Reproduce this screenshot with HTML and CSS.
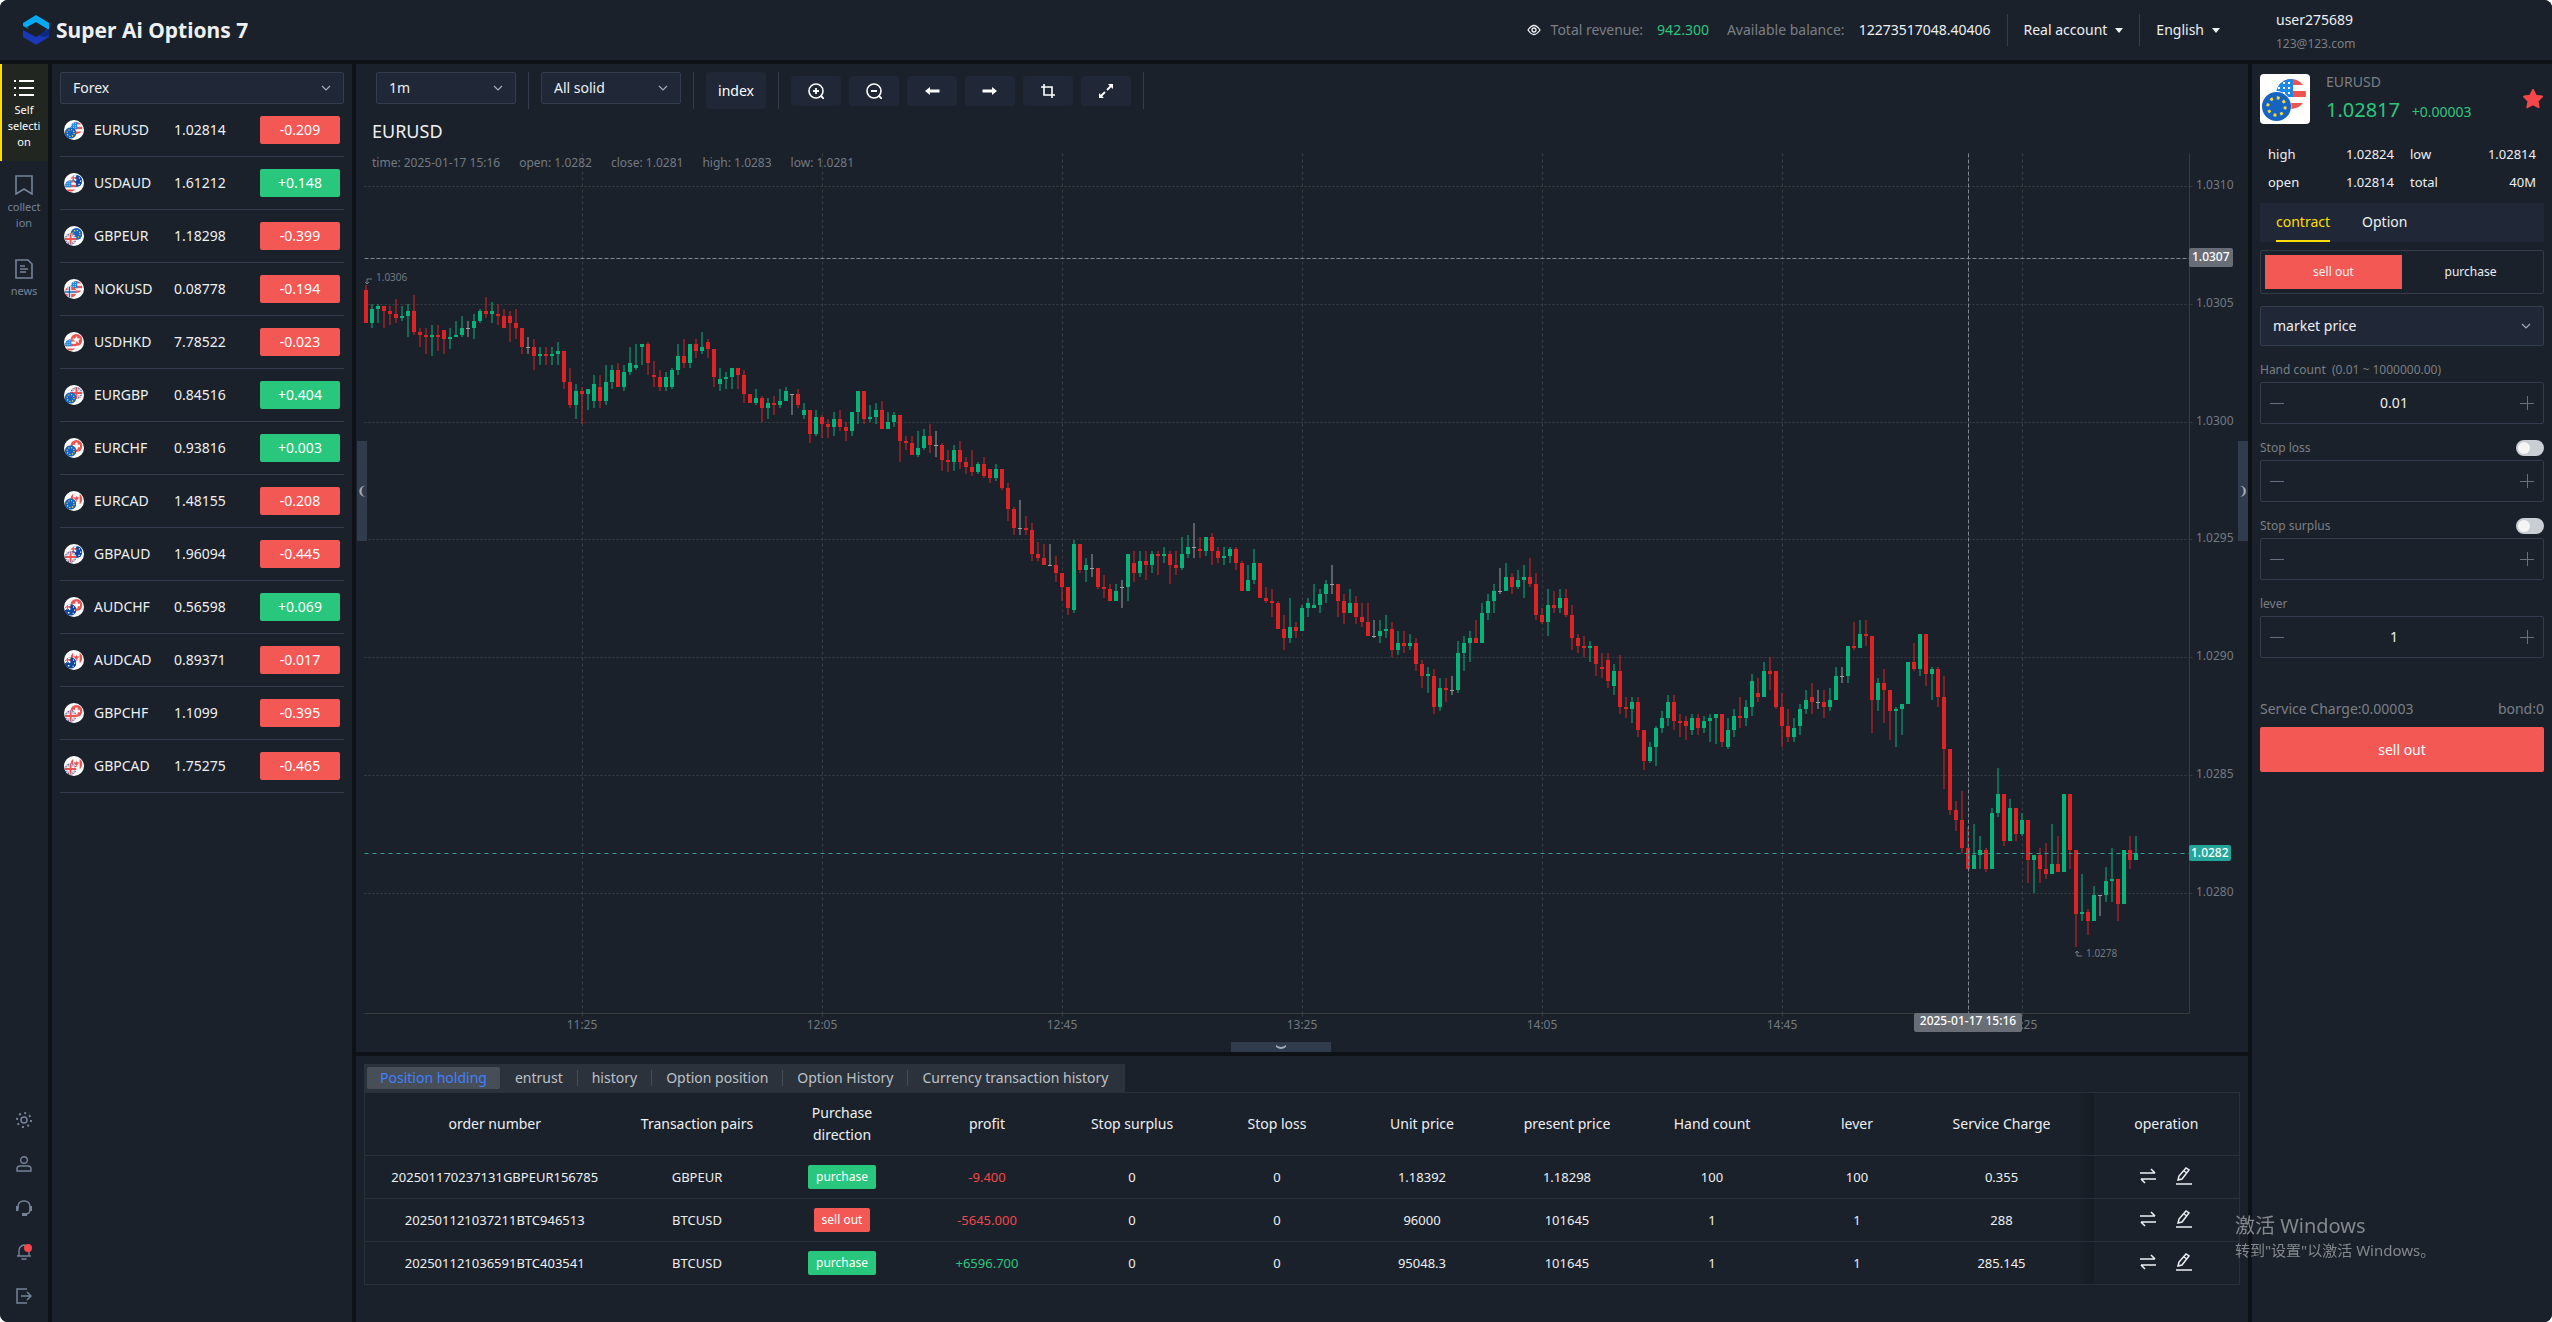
FILE: index.html
```html
<!DOCTYPE html>
<html lang="en">
<head>
<meta charset="utf-8">
<meta name="viewport" content="width=device-width, initial-scale=1">
<title>Super Ai Options 7</title>
<link rel="stylesheet" href="styles.css">
</head>
<body>
<svg class="defs" aria-hidden="true">
  <clipPath id="disc"><circle cx="15" cy="15" r="15"/></clipPath>
  <symbol id="usd" viewBox="0 0 30 30"><g clip-path="url(#disc)"><path fill="#fff" d="M0 0h30v30H0z"/><path fill="#ef5350" d="M0 0h30v6H0zM0 12h30v6H0zM0 24h30v6H0z"/><path fill="#1e88e5" d="M0 0h17v18H0z"/><path stroke="#fff" stroke-width="2" stroke-dasharray="2 3" d="M2 4h15M2 9h15M2 14h15"/></g></symbol>
  <symbol id="eur" viewBox="0 0 30 30"><circle cx="15" cy="15" r="15" fill="#1565c0"/><circle cx="15" cy="15" r="9" fill="none" stroke="#fdd835" stroke-width="3" stroke-dasharray="3 4.07"/></symbol>
  <symbol id="gbp" viewBox="0 0 30 30"><g clip-path="url(#disc)"><path fill="#3f5fb0" d="M0 0h30v30H0z"/><path stroke="#fff" stroke-width="5" d="M0 0l30 30M30 0L0 30"/><path stroke="#ef5350" stroke-width="2" d="M0 0l30 30M30 0L0 30"/><path stroke="#fff" stroke-width="9" d="M15 0v30M0 15h30"/><path stroke="#ef5350" stroke-width="5" d="M15 0v30M0 15h30"/></g></symbol>
  <symbol id="aud" viewBox="0 0 30 30"><g clip-path="url(#disc)"><path fill="#0d47a1" d="M0 0h30v30H0z"/><path stroke="#fff" stroke-width="5" d="M0 0l14 14M14 0L0 14"/><path stroke="#ef5350" stroke-width="3" d="M7 0v15M0 7h15"/><path fill="#fff" d="M21 6h3v3h-3zM24 14h3v3h-3zM20 22h3v3h-3zM8 20h4v4H8z"/></g></symbol>
  <symbol id="nok" viewBox="0 0 30 30"><g clip-path="url(#disc)"><path fill="#ef5350" d="M0 0h30v30H0z"/><path stroke="#fff" stroke-width="9" d="M12 0v30M0 15h30"/><path stroke="#1565c0" stroke-width="4" d="M12 0v30M0 15h30"/></g></symbol>
  <symbol id="hkd" viewBox="0 0 30 30"><circle cx="15" cy="15" r="15" fill="#ef5350"/><path fill="#fff" d="M15 5l3 6 7 0-5 5 2 7-7-4-7 4 2-7-5-5 7 0z"/></symbol>
  <symbol id="chf" viewBox="0 0 30 30"><circle cx="15" cy="15" r="15" fill="#ef5350"/><path fill="#fff" d="M12 6h6v6h6v6h-6v6h-6v-6H6v-6h6z"/></symbol>
  <symbol id="cad" viewBox="0 0 30 30"><g clip-path="url(#disc)"><path fill="#fff" d="M0 0h30v30H0z"/><path fill="#ef5350" d="M0 0h7v30H0zM23 0h7v30h-7zM15 7l2 4 4-1-1 5-4 3v4h-2v-4l-4-3-1-5 4 1z"/></g></symbol>
  <symbol id="chevron" viewBox="0 0 12 12"><path d="M2 4l4 4 4-4" fill="none" stroke="currentColor" stroke-width="1.2"/></symbol>
  <symbol id="swap" viewBox="0 0 16 16"><path d="M0 5h15M11 1l4 4M16 11H1M5 15l-4-4" fill="none" stroke="currentColor" stroke-width="1.6"/></symbol>
  <symbol id="edit" viewBox="0 0 16 18"><path d="M0 17h16M2 13l1-4 7-8 3 2-7 9zM8 4l3 2" fill="none" stroke="currentColor" stroke-width="1.5"/></symbol>
</svg>

<div class="app">
  <header class="topbar">
    <svg class="logo" viewBox="0 0 26 30"><path fill="#03a9f4" d="M0 8L13 0l13 8v7l-13-8-9 5 2 2-6-3z"/><path fill="#1a37b8" d="M0 15l13 7 9-5v-2l4-1v8l-13 8-13-8z"/><path fill="#0b2a80" d="M20 17l6-3v7l-6 1-4-2z"/></svg>
    <h1 class="brand">Super Ai Options 7</h1>
    <dl class="totals">
      <svg class="eye" viewBox="0 0 14 14"><path d="M1 7q6-9 12 0q-6 9-12 0z" fill="none" stroke="currentColor" stroke-width="1.3"/><circle cx="7" cy="7" r="2" fill="none" stroke="currentColor" stroke-width="1.3"/></svg>
      <dt>Total revenue:</dt><dd class="up">942.300</dd>
      <dt>Available balance:</dt><dd>12273517048.40406</dd>
    </dl>
    <button class="menu" type="button">Real account <span class="caret"></span></button>
    <button class="menu" type="button">English <span class="caret"></span></button>
    <div class="user"><span>user275689</span><small>123@123.com</small></div>
  </header>

  <div class="body">
    <nav class="rail">
      <a class="rail-item active" href="#self"><svg viewBox="0 0 20 20"><path d="M5 3h15M5 10h15M5 17h15M0 3h2M0 10h2M0 17h2" stroke="currentColor" stroke-width="2"/></svg><span>Self<br>selecti<br>on</span></a>
      <a class="rail-item" href="#collection"><svg viewBox="0 0 20 20"><path d="M2 1h16v18l-8-5-8 5z" fill="none" stroke="currentColor" stroke-width="1.6"/></svg><span>collect<br>ion</span></a>
      <a class="rail-item" href="#news"><svg viewBox="0 0 20 20"><path d="M2 1h12l4 4v14H2zM6 7h5M6 10h8M6 13h6" fill="none" stroke="currentColor" stroke-width="1.6"/></svg><span>news</span></a>
      <div class="rail-tools">
        <button type="button" aria-label="Theme"><svg viewBox="0 0 16 16"><circle cx="8" cy="8" r="3" fill="none" stroke="currentColor" stroke-width="1.5"/><circle cx="8" cy="8" r="7" fill="none" stroke="currentColor" stroke-width="2" stroke-dasharray="2 3.5"/></svg></button>
        <button type="button" aria-label="Profile"><svg viewBox="0 0 16 16"><circle cx="8" cy="4" r="3.3" fill="none" stroke="currentColor" stroke-width="1.4"/><path d="M1 15v-2q0-3 3-3h8q3 0 3 3v2z" fill="none" stroke="currentColor" stroke-width="1.4"/></svg></button>
        <button type="button" aria-label="Support"><svg viewBox="0 0 16 16"><path d="M2 9V7q0-6 6-6t6 6v3q0 4-5 4" fill="none" stroke="currentColor" stroke-width="1.4"/><path d="M0 6h2.500v5H0zM13.500 6H16v5h-2.500zM6 13h5v3H6z" fill="currentColor"/></svg></button>
        <button class="dot" type="button" aria-label="Notifications"><svg viewBox="0 0 16 16"><path d="M1 12h14M3 12V7q0-5 5-6q5 1 5 6v5M5.500 15h5" fill="none" stroke="currentColor" stroke-width="1.4"/></svg></button>
        <button type="button" aria-label="Log out"><svg viewBox="0 0 16 16"><path d="M11 1H1v14h10M5 8h10M11 4l4 4-4 4" fill="none" stroke="currentColor" stroke-width="1.5"/></svg></button>
      </div>
    </nav>

    <aside class="watch">
      <label class="select"><select aria-label="Market"><option>Forex</option></select><svg><use href="#chevron"/></svg></label>
      <ul class="pairs">
        <li><svg class="duo" viewBox="0 0 50 50"><circle cx="25" cy="25" r="25"/><use href="#usd" x="16" y="5" width="30" height="30"/><use href="#eur" x="2" y="18" width="29" height="29"/></svg><span>EURUSD</span><span>1.02814</span><b class="tag down">-0.209</b></li>
        <li><svg class="duo" viewBox="0 0 50 50"><circle cx="25" cy="25" r="25"/><use href="#aud" x="16" y="5" width="30" height="30"/><use href="#usd" x="2" y="18" width="29" height="29"/></svg><span>USDAUD</span><span>1.61212</span><b class="tag rise">+0.148</b></li>
        <li><svg class="duo" viewBox="0 0 50 50"><circle cx="25" cy="25" r="25"/><use href="#eur" x="16" y="5" width="30" height="30"/><use href="#gbp" x="2" y="18" width="29" height="29"/></svg><span>GBPEUR</span><span>1.18298</span><b class="tag down">-0.399</b></li>
        <li><svg class="duo" viewBox="0 0 50 50"><circle cx="25" cy="25" r="25"/><use href="#usd" x="16" y="5" width="30" height="30"/><use href="#nok" x="2" y="18" width="29" height="29"/></svg><span>NOKUSD</span><span>0.08778</span><b class="tag down">-0.194</b></li>
        <li><svg class="duo" viewBox="0 0 50 50"><circle cx="25" cy="25" r="25"/><use href="#hkd" x="16" y="5" width="30" height="30"/><use href="#usd" x="2" y="18" width="29" height="29"/></svg><span>USDHKD</span><span>7.78522</span><b class="tag down">-0.023</b></li>
        <li><svg class="duo" viewBox="0 0 50 50"><circle cx="25" cy="25" r="25"/><use href="#gbp" x="16" y="5" width="30" height="30"/><use href="#eur" x="2" y="18" width="29" height="29"/></svg><span>EURGBP</span><span>0.84516</span><b class="tag rise">+0.404</b></li>
        <li><svg class="duo" viewBox="0 0 50 50"><circle cx="25" cy="25" r="25"/><use href="#chf" x="16" y="5" width="30" height="30"/><use href="#eur" x="2" y="18" width="29" height="29"/></svg><span>EURCHF</span><span>0.93816</span><b class="tag rise">+0.003</b></li>
        <li><svg class="duo" viewBox="0 0 50 50"><circle cx="25" cy="25" r="25"/><use href="#cad" x="16" y="5" width="30" height="30"/><use href="#eur" x="2" y="18" width="29" height="29"/></svg><span>EURCAD</span><span>1.48155</span><b class="tag down">-0.208</b></li>
        <li><svg class="duo" viewBox="0 0 50 50"><circle cx="25" cy="25" r="25"/><use href="#aud" x="16" y="5" width="30" height="30"/><use href="#gbp" x="2" y="18" width="29" height="29"/></svg><span>GBPAUD</span><span>1.96094</span><b class="tag down">-0.445</b></li>
        <li><svg class="duo" viewBox="0 0 50 50"><circle cx="25" cy="25" r="25"/><use href="#chf" x="16" y="5" width="30" height="30"/><use href="#aud" x="2" y="18" width="29" height="29"/></svg><span>AUDCHF</span><span>0.56598</span><b class="tag rise">+0.069</b></li>
        <li><svg class="duo" viewBox="0 0 50 50"><circle cx="25" cy="25" r="25"/><use href="#cad" x="16" y="5" width="30" height="30"/><use href="#aud" x="2" y="18" width="29" height="29"/></svg><span>AUDCAD</span><span>0.89371</span><b class="tag down">-0.017</b></li>
        <li><svg class="duo" viewBox="0 0 50 50"><circle cx="25" cy="25" r="25"/><use href="#chf" x="16" y="5" width="30" height="30"/><use href="#gbp" x="2" y="18" width="29" height="29"/></svg><span>GBPCHF</span><span>1.1099</span><b class="tag down">-0.395</b></li>
        <li><svg class="duo" viewBox="0 0 50 50"><circle cx="25" cy="25" r="25"/><use href="#cad" x="16" y="5" width="30" height="30"/><use href="#gbp" x="2" y="18" width="29" height="29"/></svg><span>GBPCAD</span><span>1.75275</span><b class="tag down">-0.465</b></li>
      </ul>
    </aside>

    <main class="center">
      <section class="market">
        <div class="toolbar">
          <label class="select"><select aria-label="Interval"><option>1m</option></select><svg><use href="#chevron"/></svg></label>
          <i class="bar"></i>
          <label class="select"><select aria-label="Candle style"><option>All solid</option></select><svg><use href="#chevron"/></svg></label>
          <i class="bar"></i>
          <button class="index" type="button">index</button>
          <i class="bar"></i>
          <div class="tools">
            <button type="button" aria-label="Zoom in"><svg viewBox="0 0 16 16"><circle cx="8" cy="8" r="7" fill="none" stroke="currentColor" stroke-width="1.6"/><path d="M8 5v6M5 8h6M12.500 12.500L16 16" stroke="currentColor" stroke-width="1.8"/></svg></button>
            <button type="button" aria-label="Zoom out"><svg viewBox="0 0 16 16"><circle cx="8" cy="8" r="7" fill="none" stroke="currentColor" stroke-width="1.6"/><path d="M5 8h6M12.500 12.500L16 16" stroke="currentColor" stroke-width="1.8"/></svg></button>
            <button type="button" aria-label="Move left"><svg viewBox="0 0 16 16"><path d="M1 8l5-4v2.500h9.500v3H6V12z" fill="currentColor"/></svg></button>
            <button type="button" aria-label="Move right"><svg viewBox="0 0 16 16"><path d="M15 8l-5-4v2.500H.5v3H10V12z" fill="currentColor"/></svg></button>
            <button type="button" aria-label="Crop"><svg viewBox="0 0 16 16"><path d="M4 1v11h11M1 4h11v11" fill="none" stroke="currentColor" stroke-width="1.6"/></svg></button>
            <button type="button" aria-label="Full screen"><svg viewBox="0 0 16 16"><path d="M10 1h5v5zM1 10v5h5z" fill="currentColor"/><path d="M9 7l5-5M7 9l-5 5" stroke="currentColor" stroke-width="1.8"/></svg></button>
          </div>
          <i class="bar"></i>
        </div>
        <h2 class="symbol">EURUSD</h2>
        <div class="chart" id="chart">
          <svg id="plot" role="img" aria-label="EURUSD one minute candles"></svg>
          <p class="legend"><span>time: 2025-01-17 15:16</span><span>open: 1.0282</span><span>close: 1.0281</span><span>high: 1.0283</span><span>low: 1.0281</span></p>
        </div>
        <button class="fold left" type="button" aria-label="Collapse list">❨</button>
        <button class="fold right" type="button" aria-label="Collapse order panel">❩</button>
        <button class="fold bottom" type="button" aria-label="Collapse positions"><svg viewBox="0 0 12 6"><path d="M1 1q5 4 10 0v2q-5 4-10 0z" fill="currentColor"/></svg></button>
      </section>

      <section class="positions">
        <div class="tabs">
          <button class="on" type="button">Position holding</button><button type="button">entrust</button><button type="button">history</button><button type="button">Option position</button><button type="button">Option History</button><button type="button">Currency transaction history</button>
        </div>
        <table class="orders">
          <colgroup><col><col class="c" span="9"><col class="charge"><col class="ops"></colgroup>
          <thead><tr><th>order number</th><th>Transaction pairs</th><th>Purchase direction</th><th>profit</th><th>Stop surplus</th><th>Stop loss</th><th>Unit price</th><th>present price</th><th>Hand count</th><th>lever</th><th>Service Charge</th><th>operation</th></tr></thead>
          <tbody>
            <tr><td>202501170237131GBPEUR156785</td><td>GBPEUR</td><td><b class="side rise">purchase</b></td><td class="loss">-9.400</td><td>0</td><td>0</td><td>1.18392</td><td>1.18298</td><td>100</td><td>100</td><td>0.355</td><td><button type="button" aria-label="Close"><svg><use href="#swap"/></svg></button><button type="button" aria-label="Edit"><svg><use href="#edit"/></svg></button></td></tr>
            <tr><td>202501121037211BTC946513</td><td>BTCUSD</td><td><b class="side down">sell out</b></td><td class="loss">-5645.000</td><td>0</td><td>0</td><td>96000</td><td>101645</td><td>1</td><td>1</td><td>288</td><td><button type="button" aria-label="Close"><svg><use href="#swap"/></svg></button><button type="button" aria-label="Edit"><svg><use href="#edit"/></svg></button></td></tr>
            <tr><td>202501121036591BTC403541</td><td>BTCUSD</td><td><b class="side rise">purchase</b></td><td class="up">+6596.700</td><td>0</td><td>0</td><td>95048.3</td><td>101645</td><td>1</td><td>1</td><td>285.145</td><td><button type="button" aria-label="Close"><svg><use href="#swap"/></svg></button><button type="button" aria-label="Edit"><svg><use href="#edit"/></svg></button></td></tr>
          </tbody>
        </table>
      </section>
    </main>

    <aside class="order">
      <div class="quote">
        <svg class="card" viewBox="0 0 50 50"><use href="#usd" x="16" y="5" width="30" height="30"/><circle cx="16" cy="32.500" r="15.500" fill="#fff"/><use href="#eur" x="2" y="18" width="29" height="29"/></svg>
        <div class="quote-text"><span>EURUSD</span><p class="up"><strong>1.02817</strong> +0.00003</p></div>
        <button class="star" type="button" aria-label="Favourite"><svg viewBox="0 0 22 22"><path fill="#f5464a" stroke="#f5464a" stroke-width="2" stroke-linejoin="round" d="M11 2l2.800 5.700 6.200.9-4.500 4.400 1.100 6.200L11 16.200l-5.600 3 1.100-6.200L2 8.600l6.200-.9z"/></svg></button>
      </div>
      <dl class="stats"><dt>high</dt><dd>1.02824</dd><dt>low</dt><dd>1.02814</dd><dt>open</dt><dd>1.02814</dd><dt>total</dt><dd>40M</dd></dl>
      <div class="modes"><button class="on" type="button">contract</button><button type="button">Option</button></div>
      <div class="sides"><button class="on" type="button">sell out</button><button type="button">purchase</button></div>
      <label class="select tall"><select aria-label="Order type"><option>market price</option></select><svg><use href="#chevron"/></svg></label>
      <div class="field"><label for="hands">Hand count&nbsp; (0.01 ~ 1000000.00)</label></div>
      <div class="stepper"><button type="button" aria-label="Less"></button><input id="hands" value="0.01"><button class="plus" type="button" aria-label="More"></button></div>
      <div class="field"><label for="loss">Stop loss</label><input class="switch" type="checkbox" aria-label="Use stop loss"></div>
      <div class="stepper"><button type="button" aria-label="Less"></button><input id="loss" value=""><button class="plus" type="button" aria-label="More"></button></div>
      <div class="field"><label for="surplus">Stop surplus</label><input class="switch" type="checkbox" aria-label="Use stop surplus"></div>
      <div class="stepper"><button type="button" aria-label="Less"></button><input id="surplus" value=""><button class="plus" type="button" aria-label="More"></button></div>
      <div class="field"><label for="lever">lever</label></div>
      <div class="stepper"><button type="button" aria-label="Less"></button><input id="lever" value="1"><button class="plus" type="button" aria-label="More"></button></div>
      <p class="fees"><span>Service Charge:0.00003</span><span>bond:0</span></p>
      <button class="submit" type="button">sell out</button>
    </aside>
  </div>
</div>
<div class="activate"><strong>激活 Windows</strong><span>转到"设置"以激活 Windows。</span></div>
<script src="chart.js"></script>
</body>
</html>
```

FILE: styles.css
```css
:root {
  --panel: #1a212a;
  --gap: #0e1116;
  --control: #202837;
  --line: #323c4c;
  --muted: #7b7f86;
  --text: #eef0f3;
  --green: #29c77e;
  --red: #f35855;
  --yellow: #ffdd00;
}

* { box-sizing: border-box; }

body {
  margin: 0;
  background: #fff;
  color: var(--text);
  font: 14px/20px "Noto Sans", "Noto Sans CJK SC", sans-serif;
}

button, select, input { font: inherit; color: inherit; }
button { border: 0; padding: 0; background: none; cursor: pointer; }
h1, h2, p, dl, dd, ul { margin: 0; padding: 0; }
a { text-decoration: none; }

.defs { position: absolute; width: 0; height: 0; }

.app {
  display: flex;
  flex-direction: column;
  gap: 4px;
  min-height: 100vh;
  overflow: hidden;
  border-radius: 8px;
  background: var(--gap);
}

/* top bar */
.topbar {
  display: flex;
  align-items: center;
  height: 60px;
  padding-left: 23px;
  background: var(--panel);
}
.logo { width: 26px; height: 30px; }
.brand { margin-left: 7px; font-size: 21px; font-weight: 700; line-height: 28px; }
.totals { display: flex; align-items: center; margin-left: auto; padding-right: 16px; }
.totals dt { margin-right: 14px; color: var(--muted); }
.totals dd { margin-right: 18px; }
.totals dd:last-child { margin-right: 0; }
.eye { width: 14px; height: 14px; margin-right: 10px; }
.up { color: var(--green); }
.loss { color: #f0484b; }
.menu {
  display: flex;
  align-items: center;
  gap: 8px;
  height: 32px;
  padding: 0 16px;
  border-left: 1px solid var(--line);
}
.caret { border: 4px solid transparent; border-top: 5px solid currentColor; border-bottom: 0; }
.user { display: flex; flex-direction: column; gap: 4px; width: 276px; margin-left: 40px; padding-top: 3px; }
.user small { color: var(--muted); font-size: 12px; }

.body { display: flex; gap: 4px; flex: 1; }

/* left rail */
.rail { display: flex; flex-direction: column; width: 48px; background: var(--panel); }
.rail-item {
  display: flex;
  flex-direction: column;
  align-items: center;
  gap: 4px;
  padding: 14px 2px 14px 0;
  border-left: 2px solid transparent;
  color: #75839a;
  font-size: 11px;
  line-height: 16px;
  text-align: center;
}
.rail-item svg { width: 20px; height: 20px; }
.rail-item.active { padding-bottom: 11px; border-color: var(--yellow); background: #222620; color: #fff; }
.rail-tools { display: flex; flex-direction: column; margin-top: auto; padding-bottom: 4px; }
.rail-tools button { display: grid; place-items: center; height: 44px; color: #75839a; position: relative; }
.rail-tools svg { width: 16px; height: 16px; }
.dot::after {
  content: "";
  position: absolute;
  top: 14px;
  left: 24px;
  width: 8px;
  height: 8px;
  border-radius: 50%;
  background: #f5464a;
}

/* selects */
.select { position: relative; display: block; width: 140px; height: 32px; }
.select select {
  appearance: none;
  width: 100%;
  height: 100%;
  padding: 0 12px;
  border: 1px solid var(--line);
  border-radius: 2px;
  background: var(--control);
}
.select svg { position: absolute; top: 50%; right: 12px; width: 12px; height: 12px; margin-top: -6px; color: #a4acb8; pointer-events: none; }

/* watch list */
.watch { width: 300px; padding: 8px; background: var(--panel); }
.watch .select { width: 100%; }
.pairs { list-style: none; }
.pairs li {
  display: grid;
  grid-template-columns: 30px 80px 1fr 80px;
  align-items: center;
  height: 53px;
  padding: 0 4px;
  border-bottom: 1px solid var(--line);
}
.duo { width: 20px; height: 20px; fill: #fff; }
.tag, .side { border-radius: 2px; font-weight: 400; text-align: center; color: #fff; }
.tag { line-height: 28px; }
.rise { background: var(--green); }
.down { background: var(--red); }

/* chart */
.center { display: flex; flex: 1; flex-direction: column; gap: 4px; min-width: 0; }
.market { position: relative; display: flex; flex: 1; flex-direction: column; background: var(--panel); }
.toolbar { display: flex; gap: 12px; height: 45px; padding: 8px 20px 0; }
.bar { width: 1px; height: 37px; background: var(--line); }
.index { width: 60px; height: 37px; border-radius: 4px; background: var(--control); color: #fff; }
.tools { display: flex; align-items: center; gap: 8px; height: 37px; }
.tools button { display: grid; place-items: center; width: 50px; height: 30px; border-radius: 4px; background: var(--control); color: #fff; }
.tools svg { width: 16px; height: 16px; }
.symbol { margin: 8px 16px 0; font-size: 18px; font-weight: 400; line-height: 28px; }
.chart { position: relative; flex: 1; min-height: 420px; margin-left: 8px; overflow: hidden; }
.chart svg { position: absolute; inset: 0; width: 100%; height: 100%; }
.legend { position: absolute; top: 8px; left: 8px; display: flex; gap: 19px; color: #727a84; font-size: 12px; }

.grid { stroke: #3d4044; stroke-dasharray: 2 2; }
.grid.time { stroke: #3a3e44; stroke-dasharray: 3 3; }
.axis { stroke: #3a3b3d; }
.cross { stroke: #828892; stroke-dasharray: 4 2; }
.last { stroke: #26a69a; stroke-dasharray: 4 4; }
.scale { fill: #727a84; font-size: 12px; }
.mark { fill: #727a84; font-size: 10px; }
.hook { fill: none; stroke: #727a84; }
.pill { fill: #686d76; }
.pill.now { fill: #26a69a; }
.pill-text { fill: #fff; font-size: 12px; font-weight: 500; }
.r { fill: #dd2323; }
.g { fill: #07b379; }
.n { fill: #a0a0a0; }
.wick { fill-opacity: .5; }

.fold { position: absolute; display: grid; place-items: center; background: #303b4c; color: #a4acb8; font-size: 12px; line-height: 12px; }
.fold.left { top: 377px; left: 1px; width: 10px; height: 100px; }
.fold.right { top: 377px; right: 0; width: 10px; height: 100px; }
.fold.bottom { bottom: 0; left: 50%; width: 100px; height: 10px; margin-left: -71px; }
.fold svg { width: 12px; height: 6px; }

/* positions */
.positions { min-height: 266px; padding: 8px; background: var(--panel); }
.tabs { display: flex; align-items: center; width: max-content; height: 28px; padding: 0 3px; background: #2b323b; color: #bdc1c8; }
.tabs button { padding: 0 14px; border-left: 1px solid #444b55; line-height: 16px; }
.tabs .on { padding: 0 13px; border: 0; border-radius: 2px; background: #474e57; color: #4080ff; line-height: 22px; }
.tabs .on + button { border-color: transparent; }

.orders { width: 100%; table-layout: fixed; border-collapse: collapse; border: 1px solid #28303d; text-align: center; }
.orders .c { width: 145px; }
.orders .charge { width: 164px; }
.orders .ops { width: 146px; }
.orders th { height: 63px; padding: 0 8px; font-weight: 400; line-height: 22px; }
.orders th:nth-child(3) { padding: 0 36px; }
.orders td { height: 43px; padding: 0; border-top: 1px solid #28303d; font-size: 13px; }
.orders tr > :nth-child(11) { padding: 0 20px 0 0; background: linear-gradient(90deg, transparent 90%, #171c24); }
.orders td:last-child { padding-bottom: 4px; }
.orders button { margin: 0 10px; vertical-align: middle; }
.orders button svg { display: block; width: 16px; height: 18px; }
.side { display: inline-block; padding: 0 8px; font-size: 12px; line-height: 24px; }

/* order form */
.order { width: 300px; padding: 0 8px; background: var(--panel); }
.quote { display: flex; align-items: center; height: 70px; }
.card { width: 50px; height: 50px; border-radius: 4px; background: #fff; }
.quote-text { margin-left: 16px; padding-top: 3px; color: var(--muted); }
.quote-text p { line-height: 36px; }
.quote-text strong { margin-right: 8px; font-size: 20px; font-weight: 400; }
.star { margin-left: auto; }
.star svg { display: block; width: 22px; height: 22px; }
.stats { display: grid; grid-template-columns: 1fr 1fr 1fr 1fr; padding: 6px 8px 0; font-size: 13px; line-height: 28px; }
.stats dd { text-align: right; }
.stats dd:nth-of-type(odd) { padding-right: 8px; }
.stats dt:nth-of-type(even) { padding-left: 8px; }
.modes { display: flex; gap: 32px; height: 39px; margin-top: 7px; padding: 0 16px; background: var(--control); }
.modes button { border-bottom: 2px solid transparent; }
.modes .on { border-color: var(--yellow); color: var(--yellow); }
.sides { display: flex; height: 44px; margin: 8px 0 12px; padding: 4px; border: 1px solid var(--line); border-radius: 2px; font-size: 12px; }
.sides button { flex: 1; }
.sides .on { background: var(--red); }
.select.tall { width: 100%; height: 40px; margin-bottom: 12px; }
.field { display: flex; align-items: center; justify-content: space-between; height: 24px; margin-top: 12px; color: var(--muted); font-size: 12px; }
.switch { appearance: none; width: 28px; height: 16px; margin: 0; padding: 2px; border-radius: 8px; background: #c9cdd4; }
.switch::before { content: ""; display: block; width: 12px; height: 12px; border-radius: 50%; background: #f5f5f5; }
.stepper { display: flex; height: 42px; border: 1px solid var(--line); border-radius: 2px; }
.stepper input { flex: 1; min-width: 0; padding: 0; border: 0; background: none; text-align: center; }
.stepper button { width: 32px; background: linear-gradient(#667080, #667080) center / 14px 1px no-repeat; }
.stepper .plus { background: linear-gradient(#667080, #667080) center / 14px 1px no-repeat, linear-gradient(#667080, #667080) center / 1px 14px no-repeat; }
.stepper input { padding-right: 16px; }
.fees { display: flex; justify-content: space-between; margin: 41px 0 8px; color: var(--muted); }
.submit { width: 100%; height: 45px; border-radius: 2px; background: var(--red); color: #fff; }

/* system notice */
.activate { position: fixed; right: 120px; bottom: 62px; width: 197px; display: flex; flex-direction: column; gap: 0; color: #85888c; font-size: 15px; pointer-events: none; white-space: nowrap; }
.activate strong { font-size: 20px; font-weight: 400; line-height: 28px; }
```

FILE: chart.js
```js
// One bar per entry: colour (g up, r down, n flat), body top, body bottom, high, low.
// Values are units below the 1.0310 line; 118 units make 0.0005.
const BARS = `
r 104 137 99 137,g 123 137 118 142,g 120 123 118 137,r 120 125 120 142,r 125 128 120 139,r 128 132 113 137
g 130 132 120 135,g 125 130 118 151,r 125 146 109 149,r 146 149 142 161,r 149 151 142 168,g 149 151 139 170
r 149 151 139 165,r 144 153 144 168,g 151 153 142 163,g 149 151 135 151,g 142 149 130 151,n 142 143 135 151
g 135 142 128 153,g 125 135 123 137,r 125 128 111 132,g 125 128 116 137,r 128 130 118 139,r 130 142 123 142
r 130 137 125 156,r 137 142 123 153,r 142 161 142 168,n 161 162 151 168,r 161 170 153 184,g 168 170 161 179
r 168 170 161 179,g 168 170 161 179,g 165 168 156 179,r 165 196 165 203,r 196 219 182 222,g 205 219 198 233
r 205 208 201 238,g 203 208 203 224,g 198 215 189 222,r 201 215 189 222,g 196 215 179 219,g 184 196 179 203
r 184 201 177 201,g 186 201 179 205,g 177 186 161 189,g 179 182 158 184,g 158 161 158 179,r 158 177 156 189
r 189 191 175 201,r 191 201 184 205,g 191 201 186 205,g 184 201 182 203,g 170 184 158 189,r 170 177 153 182
g 158 177 158 182,r 158 165 153 172,g 161 165 146 168,r 156 163 153 172,r 163 191 163 201,g 193 198 182 205
g 191 193 186 203,g 182 191 182 203,r 182 189 182 203,r 189 208 184 217,r 208 217 208 217,g 212 217 203 219
r 212 222 210 236,g 217 222 212 233,r 217 219 210 229,g 215 219 203 222,g 205 215 201 215,n 208 209 208 229
r 208 219 203 222,g 224 229 217 233,r 224 248 224 257,g 231 248 224 250,r 231 238 229 252,r 238 241 233 252
g 233 241 226 250,r 233 241 224 245,r 241 245 236 255,g 226 245 226 250,g 205 226 205 238,r 205 233 205 238
g 231 233 219 236,g 224 231 217 238,r 224 243 215 243,g 236 243 226 243,g 229 236 226 241,r 229 255 229 276
r 255 257 250 264,r 257 269 250 269,g 262 269 245 271,g 250 262 243 264,r 250 259 238 267,n 259 260 245 271
r 259 274 257 285,r 274 276 264 286,g 264 276 259 285,r 264 276 255 283,r 276 281 271 288,r 281 286 264 290
g 278 286 276 288,r 278 290 271 292,r 283 292 283 297,g 283 292 278 295,r 283 302 283 304,r 302 323 297 335
r 323 342 321 349,n 342 343 314 349,r 342 344 330 349,r 344 368 337 375,r 368 372 356 375,r 372 379 358 379
n 379 380 358 380,r 379 387 370 396,r 387 401 387 415,r 401 422 401 429,g 358 424 354 427,r 358 384 358 387
g 379 384 372 396,n 382 383 368 391,r 382 401 382 403,r 401 403 389 412,r 403 415 398 415,g 405 415 398 415
n 401 402 394 422,g 368 401 368 415,r 377 387 365 396,g 375 387 365 391,r 375 379 365 394,g 368 379 365 387
r 368 370 365 389,g 368 370 361 377,r 368 379 365 398,r 379 382 365 389,g 368 382 351 384,g 361 368 349 372
n 361 362 337 372,r 363 365 351 372,g 351 365 351 370,r 351 365 347 379,r 365 372 361 377,g 370 372 361 379
g 363 370 361 377,r 363 377 361 384,r 377 405 375 405,g 394 405 379 405,g 377 394 363 398,r 377 412 377 412
r 412 415 401 417,r 415 417 403 431,r 417 443 415 443,r 443 452 429 464,g 441 452 412 457,r 441 445 436 452
g 422 445 419 445,g 417 422 412 431,g 419 422 398 422,g 408 419 403 427,g 398 408 394 417,n 398 399 379 408
r 398 415 398 431,r 415 427 408 438,g 417 427 403 427,r 417 431 410 438,r 431 436 417 441,r 436 450 417 450
n 450 451 434 452,g 445 450 434 457,g 443 445 429 452,r 443 464 436 471,g 457 464 445 469,r 457 460 445 467
g 457 460 448 464,r 457 478 452 485,r 478 490 474 502,g 488 490 481 507,r 490 521 483 528,g 502 521 492 525
r 502 504 492 516,n 504 505 490 509,g 467 504 455 507,g 457 467 450 485,g 452 457 445 476,r 452 457 434 457
g 427 457 417 457,g 415 427 408 434,g 405 415 398 427,n 405 406 382 408,g 391 405 377 405,r 391 401 387 408
g 394 401 384 403,g 391 394 379 412,r 391 398 372 401,r 398 429 387 434,r 429 436 422 438,g 419 436 403 450
r 419 422 405 427,g 412 422 403 427,r 412 429 403 431,r 429 452 419 464,r 452 460 448 467,r 460 462 450 471
g 460 462 455 476,r 460 478 460 490,r 481 483 467 492,r 474 495 467 502,g 485 500 478 509,r 485 521 469 528
r 521 523 511 532,g 516 523 511 537,r 516 544 511 551,r 544 575 544 584,g 561 575 556 577,g 542 561 540 580
g 532 542 525 547,g 516 532 509 540,r 516 535 509 544,r 535 537 528 551,r 535 540 530 554,g 532 544 528 549
r 532 542 528 549,g 535 542 530 547,g 532 535 528 556,g 528 532 528 558,r 528 556 528 561,g 544 561 532 563
g 530 544 523 551,r 530 532 511 542,g 521 532 514 540,g 495 521 488 530,r 507 511 492 516,g 485 511 476 511
r 485 488 471 504,r 485 521 485 523,r 521 540 507 561,r 540 551 523 556,g 542 551 532 556,g 523 540 518 549
g 514 523 504 528,r 511 516 497 528,n 516 517 504 523,r 516 521 504 532,g 514 521 502 525,g 490 514 481 514
n 490 491 481 497,g 460 490 460 497,r 460 462 436 464,g 448 462 434 462,r 448 450 434 460,r 450 514 450 547
g 497 514 492 525,r 497 504 483 537,r 504 525 504 554,g 523 525 521 561,g 518 523 518 549,g 476 518 476 518
r 476 483 457 485,g 448 483 448 490,r 448 488 448 500,g 483 488 481 514,r 483 511 481 521,r 511 563 490 603
r 563 624 563 629,r 624 634 615 645,r 634 662 605 667,r 662 683 641 683,g 669 683 638 683,g 664 669 650 683
r 664 683 662 686,g 627 683 622 683,g 608 627 582 631,r 608 655 608 660,g 622 655 613 655,r 622 648 622 655
g 634 648 627 650,r 634 674 634 697,g 669 674 669 707,r 669 683 662 697,r 683 688 657 693,g 678 688 638 688
r 678 686 650 686,g 608 686 608 686,r 608 664 608 683,r 664 728 664 761,g 726 728 688 735,r 726 735 723 749
g 709 735 700 735,n 709 710 709 730,g 695 709 681 716,g 693 695 662 716,r 693 718 693 735,g 664 718 664 718
r 664 674 650 683,g 667 674 650 674`
  .trim().split(/[,\n]/).map(row => {
    const [kind, ...v] = row.split(' ');
    return [kind, ...v.map(Number)];
  });

const STEP = 6;
const TIMES = [[36, '11:25'], [76, '12:05'], [116, '12:45'], [156, '13:25'], [196, '14:05'], [236, '14:45'], [276, '15:25']];
const PRICES = ['1.0310', '1.0305', '1.0300', '1.0295', '1.0290', '1.0285', '1.0280'];

function draw() {
  const box = document.getElementById('chart');
  const w = box.clientWidth, h = box.clientHeight;
  const right = w - 59, top = 8, bottom = h - 39;
  const k = (bottom - top) / 860;
  const x = i => right - 53 - STEP * (BARS.length - 1 - i);
  const y = v => Math.round(top + (33 + v) * k);
  const line = (cls, x1, y1, x2, y2) => `<path class="${cls}" d="M${x1 + 0.5} ${y1 + 0.5}L${x2 + 0.5} ${y2 + 0.5}"/>`;
  const text = (cls, tx, ty, s, anchor = 'start') => `<text class="${cls}" x="${tx}" y="${ty}" text-anchor="${anchor}">${s}</text>`;
  const rect = (cls, rx, ry, rw, rh, r = 0) => `<rect class="${cls}" x="${rx}" y="${ry}" width="${rw}" height="${rh}" rx="${r}"/>`;
  let out = '';

  PRICES.forEach((p, n) => {
    const py = y(n * 117.8);
    out += line('grid', 0, py, right, py) + line('axis', right, py, right + 3, py) + text('scale', right + 7, py + 3, p);
  });
  TIMES.forEach(([i, t]) => {
    out += line('grid time', x(i), top, x(i), bottom) + line('axis', x(i), bottom, x(i), bottom + 3) + text('scale', x(i), bottom + 16, t, 'middle');
  });
  out += line('axis', 0, bottom, right, bottom) + line('axis', right, top, right, bottom);

  BARS.forEach(([kind, a, b, hi, lo], i) => {
    out += rect(kind + ' wick', x(i) - 1, y(hi), 2, y(lo) - y(hi));
    out += rect(kind, x(i) - 2, y(a), 4, Math.max(1, y(b) - y(a)));
  });

  out += `<path class="hook" d="M${x(0) + 6} ${y(93)}h-5v5m-2-2l2 2 2-2"/>` + text('mark', x(0) + 10, y(95), '1.0306');
  out += `<path class="hook" d="M${x(285) + 6} ${y(770)}h-5v-5m-2 2l2-2 2 2"/>` + text('mark', x(285) + 10, y(771), '1.0278');

  out += line('cross', 0, y(72), right, y(72)) + line('cross', x(267), top, x(267), bottom);
  out += line('last', 0, y(667), right, y(667));
  out += rect('pill', right, y(72) - 10, 44, 19, 2) + text('pill-text', right + 3, y(72) + 3, '1.0307');
  out += rect('pill now', right, y(667) - 8, 42, 16, 2) + text('pill-text', right + 2, y(667) + 4, '1.0282');
  out += rect('pill', x(267) - 54, bottom, 108, 19, 2) + text('pill-text', x(267), bottom + 12, '2025-01-17 15:16', 'middle');

  document.getElementById('plot').innerHTML = out;
}

draw();
window.addEventListener('resize', draw);
```
